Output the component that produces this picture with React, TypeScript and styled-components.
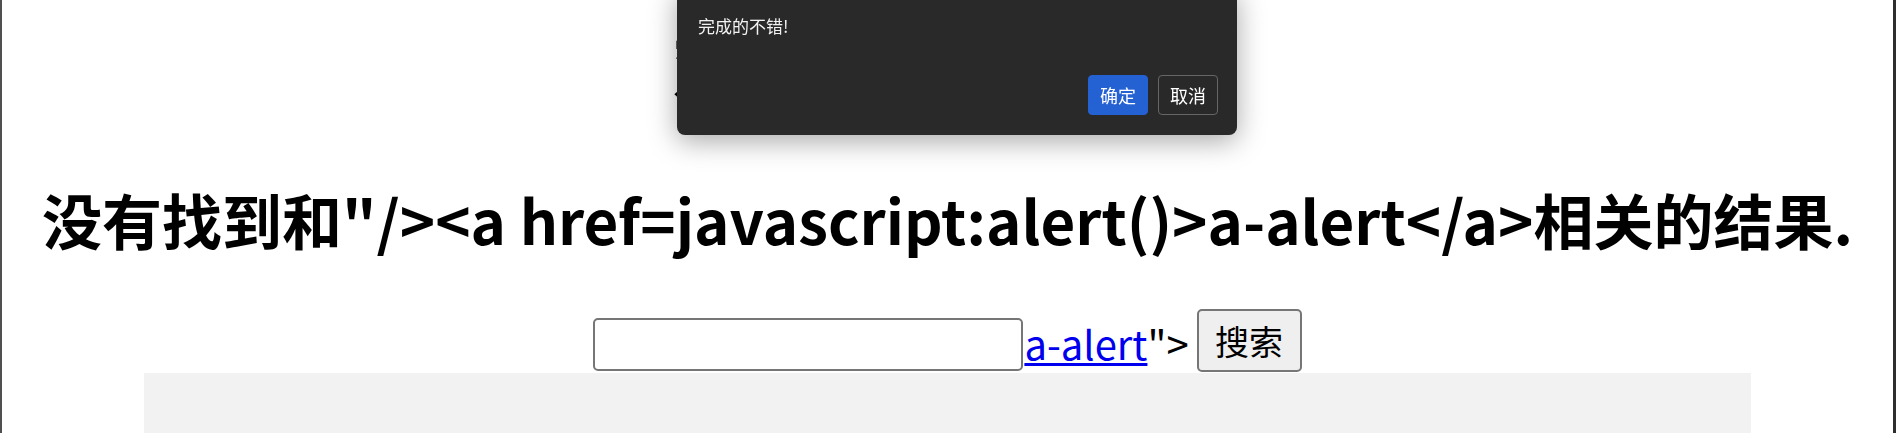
import React from 'react';
import styled, { createGlobalStyle } from 'styled-components';

const PageStyles = createGlobalStyle`
  html, body {
    margin: 0;
    padding: 0;
    background: #fff;
  }

  body {
    font-family: 'Noto Sans CJK SC', 'Noto Sans', sans-serif;
    color: #000;
    overflow: hidden;
  }
`;

const Frame = styled.div`
  position: relative;
  width: 1891px;
  min-height: 433px;
  border-left: 2px solid #505050;
  border-right: 3px solid #2e2e2e;
  display: flex;
  flex-direction: column;
  align-items: center;
`;

const Title = styled.h1`
  margin: 26px 0 0;
  font-size: 79px;
  line-height: 1;
  font-weight: 700;
  white-space: nowrap;
`;

const Result = styled.h2`
  margin: 84px 0 0;
  font-size: 60px;
  line-height: 1;
  font-weight: 700;
  white-space: nowrap;
`;

const SearchForm = styled.form`
  margin-top: 60px;
  display: flex;
  align-items: flex-end;
  height: 63px;
`;

const SearchInput = styled.input`
  box-sizing: border-box;
  width: 430px;
  height: 53px;
  margin: 0 1px 1px 0;
  border: 2px solid #767676;
  border-radius: 5px;
  background: #fff;
  font: 34px 'Noto Sans CJK SC', sans-serif;
`;

const AlertLink = styled.a`
  font-size: 40px;
  line-height: 1;
  margin-bottom: 9px;
  color: #0000ee;
  text-decoration: underline;
  text-decoration-thickness: 3px;
  text-underline-offset: 3px;
`;

const Tail = styled.span`
  font-size: 40px;
  line-height: 1;
  margin: 0 8px 9px 0;
`;

const SearchButton = styled.button`
  box-sizing: border-box;
  width: 105px;
  height: 63px;
  padding: 0;
  border: 2px solid #767676;
  border-radius: 5px;
  background: #efefef;
  font: 34px 'Noto Sans CJK SC', sans-serif;
  color: #000;
`;

const ImageSlot = styled.div`
  margin-top: 1px;
  width: 1607px;
  height: 300px;
  background: #f2f2f2;
`;

const Dialog = styled.div`
  position: fixed;
  top: -12px;
  left: 677px;
  box-sizing: border-box;
  width: 560px;
  height: 147px;
  padding: 0 19px 20px 21px;
  display: flex;
  flex-direction: column;
  background: #292929;
  border-radius: 8px;
  box-shadow: 0 6px 28px rgba(0, 0, 0, 0.35);
`;

const Message = styled.p`
  margin: 27px 0 0;
  font-size: 17px;
  line-height: 22px;
  color: #f2f2f2;
`;

const Actions = styled.div`
  margin-top: auto;
  display: flex;
  justify-content: flex-end;
  gap: 10px;
`;

const DialogButton = styled.button<{ $primary?: boolean }>`
  box-sizing: border-box;
  width: 60px;
  height: 40px;
  padding: 0;
  border-radius: 4px;
  border: 1px solid ${(p) => (p.$primary ? '#2461d3' : '#666')};
  background: ${(p) => (p.$primary ? '#2461d3' : 'transparent')};
  color: #fff;
  font: 18px 'Noto Sans CJK SC', sans-serif;
`;

export default function App() {
  return (
    <>
      <PageStyles />
      <Frame>
        <Title>欢迎来到level5</Title>
        <Result>没有找到和"/&gt;&lt;a href=javascript:alert()&gt;a-alert&lt;/a&gt;相关的结果.</Result>
        <SearchForm onSubmit={(e) => e.preventDefault()}>
          <SearchInput name="keyword" />
          <AlertLink href="#">a-alert</AlertLink>
          <Tail>"&gt;</Tail>
          <SearchButton type="submit">搜索</SearchButton>
        </SearchForm>
        <ImageSlot />
      </Frame>
      <Dialog role="alertdialog">
        <Message>完成的不错!</Message>
        <Actions>
          <DialogButton $primary>确定</DialogButton>
          <DialogButton>取消</DialogButton>
        </Actions>
      </Dialog>
    </>
  );
}
